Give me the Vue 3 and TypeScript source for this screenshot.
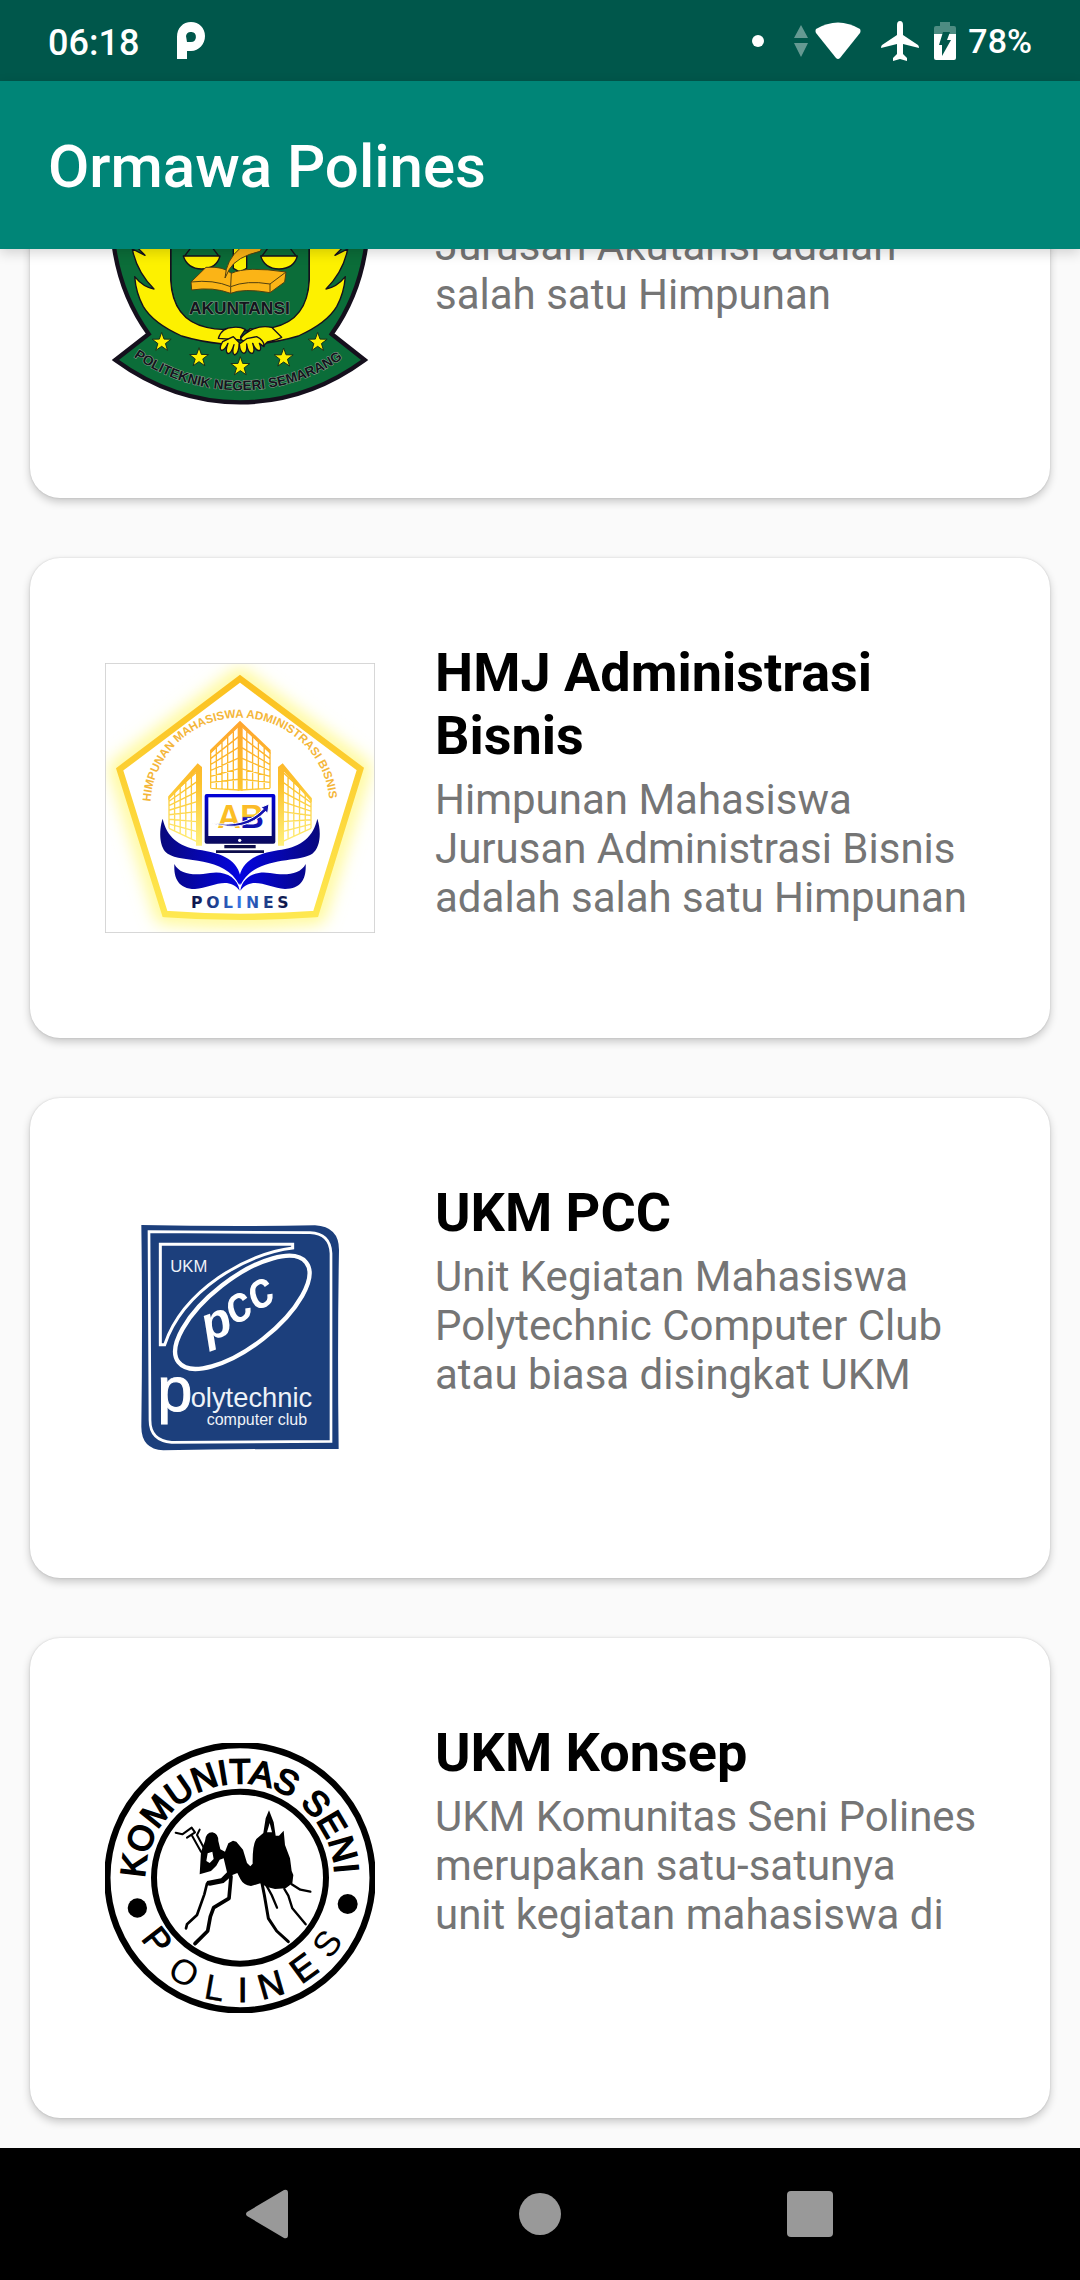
<script setup lang="ts">
interface Organisation {
  id: string
  name: string
  summary: string
}

interface ArcLetter {
  char: string
  x: number
  y: number
  angle: number
  weight: number
}

const organisations: Organisation[] = [
  {
    id: 'akuntansi',
    name: 'HMJ Akuntansi',
    summary: 'Himpunan Mahasiswa\nJurusan Akutansi adalah\nsalah satu Himpunan',
  },
  {
    id: 'bisnis',
    name: 'HMJ Administrasi Bisnis',
    summary: 'Himpunan Mahasiswa\nJurusan Administrasi Bisnis\nadalah salah satu Himpunan',
  },
  {
    id: 'pcc',
    name: 'UKM PCC',
    summary: 'Unit Kegiatan Mahasiswa\nPolytechnic Computer Club\natau biasa disingkat UKM',
  },
  {
    id: 'konsep',
    name: 'UKM Konsep',
    summary: 'UKM Komunitas Seni Polines\nmerupakan satu-satunya\nunit kegiatan mahasiswa di',
  },
]

const sealLetters: ArcLetter[] = [
  { char: 'P', x: 188, y: 616, angle: 52, weight: 3 },
  { char: 'O', x: 268, y: 710, angle: 31, weight: 0 },
  { char: 'L', x: 360, y: 757, angle: 10, weight: 1 },
  { char: 'I', x: 443, y: 762, angle: 0, weight: 3 },
  { char: 'N', x: 527, y: 748, angle: -16, weight: 3 },
  { char: 'E', x: 625, y: 698, angle: -36, weight: 3 },
  { char: 'S', x: 695, y: 625, angle: -54, weight: 0 },
]

const stars: [number, number][] = [
  [215, 307],
  [327, 353],
  [451, 380],
  [581, 354],
  [683, 307],
]

function starPoints(cx: number, cy: number, radius: number): string {
  const points: string[] = []
  for (let i = 0; i < 10; i++) {
    const r = i % 2 === 0 ? radius : radius * 0.4
    const a = (Math.PI / 5) * i - Math.PI / 2
    points.push(`${(cx + r * Math.cos(a)).toFixed(1)},${(cy + r * Math.sin(a)).toFixed(1)}`)
  }
  return points.join(' ')
}

// Window grid of a building face seen in perspective
function facade(
  outer: [number, number, number],
  inner: [number, number, number],
  cols: number,
  rows: number,
): string {
  const [x0, top0, bottom0] = outer
  const [x1, top1, bottom1] = inner
  let d = ''
  for (let r = 0; r <= rows; r++) {
    const t = r / rows
    d += `M${x0} ${top0 + (bottom0 - top0) * t}L${x1} ${top1 + (bottom1 - top1) * t}`
  }
  for (let c = 0; c <= cols; c++) {
    const t = c / cols
    const x = x0 + (x1 - x0) * t
    d += `M${x} ${top0 + (top1 - top0) * t}V${bottom0 + (bottom1 - bottom0) * t}`
  }
  return d
}
</script>

<template>
  <div class="screen">
    <header class="status-bar">
      <span class="clock">06:18</span>
      <svg class="app-glyph" viewBox="0 0 30 38" width="30" height="38" aria-hidden="true">
        <path
          fill="#fff"
          fill-rule="evenodd"
          d="M1 37V15C1 6 7 0 15 0S29 6 29 14 23 29 15 29H11V37ZM11 20H15A5 5 0 1 0 10 14Z"
        />
      </svg>
      <div class="status-icons">
        <svg class="dot" viewBox="0 0 12 12" width="12" height="12" aria-hidden="true">
          <circle cx="6" cy="6" r="6" fill="#fff" />
        </svg>
        <svg class="traffic" viewBox="0 0 14 32" width="14" height="32" aria-hidden="true">
          <path d="M7 0L14 13H0ZM0 18H14L7 32Z" fill="#659992" />
        </svg>
        <svg class="wifi" viewBox="0 0 46 38" width="46" height="38" aria-hidden="true">
          <path d="M1 7Q23 -6 45 7Q46 9 45 11L25 36Q23 38 21 36L1 11Q0 9 1 7Z" fill="#fff" />
        </svg>
        <svg class="plane" viewBox="0 0 38 40" width="38" height="40" aria-hidden="true">
          <path
            fill="#fff"
            d="M19 0Q22 0 22 4V14L37 24Q38 25 38 27L22 23V33L26 37V40L19 38L12 40V37L16 33V23L0 27Q0 25 1 24L16 14V4Q16 0 19 0Z"
          />
        </svg>
        <svg class="battery" viewBox="0 0 22 38" width="22" height="38" aria-hidden="true">
          <path d="M6 0H16V4H20Q22 4 22 6V12H0V6Q0 4 2 4H6Z" fill="#4d8c82" />
          <path d="M0 12H22V36Q22 38 20 38H2Q0 38 0 36Z" fill="#fff" />
          <path d="M9 10H16L13 18H17L8 34V23H5Z" fill="#00574b" />
        </svg>
        <span class="charge">78%</span>
      </div>
    </header>

    <div class="app-bar">
      <h1>Ormawa Polines</h1>
    </div>

    <main class="scroller">
      <div class="list">
        <article v-for="item in organisations" :key="item.id" class="card">
          <div class="logo">
            <svg
              v-if="item.id === 'akuntansi'"
              viewBox="45 -387 810 882"
              width="270"
              height="294"
              role="img"
              aria-label="HMJ Akuntansi"
            >
              <path
                d="M176 282Q95 170 73 27Q60 -150 90 -250Q270 -300 450 -376Q630 -300 810 -250Q840 -150 827 27Q805 170 725 282L824 360Q650 487 450 487Q250 487 76 360Z"
                fill="#0b6d39"
                stroke="#15101d"
                stroke-width="13"
              />
              <path
                d="M242 -60V120Q248 275 420 272H480Q655 275 658 120V-60Z"
                fill="#0b6d39"
                stroke="#15101d"
                stroke-width="5"
              />
              <g fill="#fdf100" stroke="#15101d" stroke-width="4" stroke-linejoin="round">
                <path
                  d="M120 -60H242V120Q248 240 350 262Q390 272 420 266L440 290L400 312Q330 305 275 288Q190 250 160 200Q138 160 134 110Q160 142 192 147Q140 95 127 27L165 46L120 0Z"
                />
                <path
                  d="M120 -60H242V120Q248 240 350 262Q390 272 420 266L440 290L400 312Q330 305 275 288Q190 250 160 200Q138 160 134 110Q160 142 192 147Q140 95 127 27L165 46L120 0Z"
                  transform="translate(900 0) scale(-1 1)"
                />
                <path d="M430 -60H470V85L450 96L430 85Z" />
                <path d="M280 48H390Q380 86 335 87Q292 86 280 48Z" />
                <path d="M512 48H622Q612 86 567 87Q524 86 512 48Z" />
                <path d="M284 48L335 -20L386 48M516 48L567 -20L618 48" fill="none" />
                <path
                  d="M385 295Q395 262 430 262Q450 260 466 268L452 290Q450 305 470 302L490 296L520 318L532 306Q560 300 575 292L545 262Q510 255 480 272Q450 290 452 300Z"
                />
                <path d="M398 305Q386 325 394 331Q404 332 414 310Q404 336 414 341Q424 341 432 314Q424 340 434 345Q446 342 448 308L430 290Z" />
                <path d="M448 312Q450 338 462 340Q472 338 470 312Q474 342 488 340Q496 334 488 310Q496 332 508 332Q516 328 508 310L522 320Q524 302 500 290L470 296Z" />
              </g>
              <g fill="#fbb416" stroke="#51400f" stroke-width="3" stroke-linejoin="round">
                <path d="M303 126L348 82Q400 78 424 100Q470 78 588 96L584 126L540 158Q460 144 422 160Q370 140 305 150Z" />
                <path d="M303 126Q370 118 422 140Q470 120 540 132L588 96M422 140V160M540 132V158M424 100L422 138" fill="none" />
                <path d="M405 114Q408 60 450 25L480 -30L560 -60L510 34Q440 50 418 88Z" />
              </g>
              <g
                class="sans"
                font-weight="700"
                fill="#15151d"
                stroke="#8aa18f"
                stroke-width="3"
                paint-order="stroke"
              >
                <text x="297" y="223" font-size="52">AKUNTANSI</text>
                <path id="ribbon-line" d="M131 350A550 550 0 0 0 782 338" fill="none" stroke="none" />
                <text font-size="41"><textPath href="#ribbon-line">POLITEKNIK NEGERI SEMARANG</textPath></text>
              </g>
              <polygon
                v-for="[cx, cy] in stars"
                :key="cx"
                :points="starPoints(cx, cy, 30)"
                fill="#fdf100"
                stroke="#15301d"
                stroke-width="3"
              />
            </svg>

            <svg
              v-else-if="item.id === 'bisnis'"
              viewBox="30 24 810 810"
              width="270"
              height="270"
              role="img"
              aria-label="HMJ Administrasi Bisnis"
            >
              <defs>
                <linearGradient id="frame-gold" x1="0" y1="0" x2="0" y2="1">
                  <stop offset="0" stop-color="#fbc01f" />
                  <stop offset="1" stop-color="#fee850" />
                </linearGradient>
                <linearGradient id="tower-gold" gradientUnits="userSpaceOnUse" x1="0" y1="200" x2="0" y2="570">
                  <stop offset="0" stop-color="#ffa52e" />
                  <stop offset="0.5" stop-color="#fcc22c" />
                  <stop offset="1" stop-color="#fff07a" />
                </linearGradient>
                <linearGradient id="monitor-blue" gradientUnits="userSpaceOnUse" x1="0" y1="417" x2="0" y2="594">
                  <stop offset="0" stop-color="#0202d8" />
                  <stop offset="1" stop-color="#0b0b45" />
                </linearGradient>
                <linearGradient id="wing-blue" gradientUnits="userSpaceOnUse" x1="195" y1="0" x2="436" y2="0">
                  <stop offset="0" stop-color="#08087c" />
                  <stop offset="1" stop-color="#0404e0" />
                </linearGradient>
                <linearGradient id="word-blue" gradientUnits="userSpaceOnUse" x1="290" y1="0" x2="582" y2="0">
                  <stop offset="0" stop-color="#0c1145" />
                  <stop offset="0.5" stop-color="#3374e6" />
                  <stop offset="1" stop-color="#0a0f3c" />
                </linearGradient>
                <linearGradient id="letter-split" gradientUnits="userSpaceOnUse" x1="0" y1="448" x2="0" y2="520">
                  <stop offset="0" stop-color="#fbb829" />
                  <stop offset="0.5" stop-color="#fbc829" />
                  <stop offset="0.56" stop-color="#1414c0" />
                  <stop offset="1" stop-color="#1010a8" />
                </linearGradient>
                <filter id="halo" x="-20%" y="-20%" width="140%" height="140%">
                  <feGaussianBlur stdDeviation="26" />
                </filter>
              </defs>
              <rect x="30" y="24" width="810" height="810" fill="#fff" />
              <path d="M435 71L796 342L662 777Q435 796 210 777L74 343Z" fill="#fff" stroke="#fff98a" stroke-width="56" filter="url(#halo)" />
              <path d="M435 71L796 342L662 777Q435 794 210 777L74 343Z" fill="#fff" stroke="url(#frame-gold)" stroke-width="19" />
              <path id="name-arc" d="M166 457A269 269 0 0 1 704 457" fill="none" />
              <text class="sans" font-size="35" font-weight="700" fill="#f4b63a">
                <textPath href="#name-arc" startOffset="17">HIMPUNAN MAHASISWA ADMINISTRASI BISNIS</textPath>
              </text>
              <g fill="none" stroke="url(#tower-gold)" stroke-width="4">
                <path :d="facade([347, 293, 400], [432, 212, 405], 5, 6)" />
                <path :d="facade([525, 293, 400], [438, 212, 405], 5, 6)" />
                <path :d="facade([222, 425, 520], [306, 350, 560], 5, 7)" />
                <path :d="facade([648, 430, 520], [562, 350, 560], 5, 7)" />
              </g>
              <g fill="url(#tower-gold)">
                <path d="M345 285L435 197L527 285V297L443 215V407H428V215L345 297Z" />
                <path d="M220 424L308 325L321 336V572H303V350L220 436Z" />
                <path d="M650 430L563 325L549 336V572H567V350L650 442Z" />
              </g>
              <path d="M329 423Q329 417 335 417H535Q541 417 541 423V560Q541 566 535 566H335Q329 566 329 560Z" fill="url(#monitor-blue)" />
              <rect x="340" y="427" width="190" height="116" fill="#fff" />
              <circle cx="434" cy="556" r="5" fill="#fff" />
              <path d="M388 570H482V580H388ZM363 586H507V594H363Z" fill="#0d0d4a" />
              <g class="sans" font-size="98" font-weight="700">
                <text x="367" y="520" fill="#fbbd25">A</text>
                <text x="436" y="520" fill="url(#letter-split)">B</text>
              </g>
              <path d="M350 504Q450 520 505 462L498 457L522 447L518 475L512 469Q450 535 350 504Z" fill="#1212ae" stroke="#fff" stroke-width="3" />
              <g fill="url(#wing-blue)">
                <path d="M203 491C190 530 194 580 218 596C260 625 390 600 433 690Q438 680 436 662C425 610 370 592 310 584C250 574 215 545 203 491Z" />
                <path d="M238 627C236 670 250 702 300 702C350 698 400 660 434 707C428 664 385 646 345 654C300 662 255 660 238 627Z" />
                <g transform="translate(870 0) scale(-1 1)">
                  <path d="M203 491C190 530 194 580 218 596C260 625 390 600 433 690Q438 680 436 662C425 610 370 592 310 584C250 574 215 545 203 491Z" />
                  <path d="M238 627C236 670 250 702 300 702C350 698 400 660 434 707C428 664 385 646 345 654C300 662 255 660 238 627Z" />
                </g>
              </g>
              <text class="wide" x="288 334 384 424 453 504 547" y="760" font-size="47" font-weight="700" fill="url(#word-blue)">POLINES</text>
              <rect x="31" y="25" width="808" height="808" fill="none" stroke="#cfcfcf" stroke-width="3" />
            </svg>

            <svg
              v-else-if="item.id === 'pcc'"
              viewBox="-75 -21 810 810"
              width="270"
              height="270"
              role="img"
              aria-label="UKM PCC"
            >
              <path d="M34 45Q300 50 555 46Q627 50 627 120Q622 400 626 717Q350 716 100 721Q34 717 34 650Q38 350 34 45Z" fill="#1c3f7c" />
              <g fill="none" stroke="#fff">
                <path d="M57 65L540 68Q600 70 603 130V694L125 697Q60 692 60 630Z" stroke-width="8" />
                <path d="M91 103H488V114C350 130 160 240 104 404H91Z" stroke-width="9" />
                <ellipse cx="337" cy="307" rx="243" ry="101" stroke-width="13" transform="rotate(-38 337 307)" />
              </g>
              <g class="sans" fill="#fff">
                <text transform="translate(232 396) rotate(-20)" font-size="146" font-weight="700" font-style="italic">p</text>
                <text transform="translate(313 344) rotate(-28)" font-size="144" font-style="italic" stroke="#fff" stroke-width="4">c</text>
                <text transform="translate(379 302) rotate(-28)" font-size="144" font-style="italic" stroke="#fff" stroke-width="4">c</text>
                <text x="82" y="603" font-size="190" stroke="#fff" stroke-width="3">p</text>
              </g>
              <g class="sans" fill="#eef2f8">
                <text x="121" y="186" font-size="50">UKM</text>
                <text x="182" y="592" font-size="82">olytechnic</text>
                <text x="230" y="646" font-size="48">computer club</text>
              </g>
            </svg>

            <svg
              v-else
              viewBox="30 24 810 810"
              width="270"
              height="270"
              role="img"
              aria-label="UKM Konsep"
            >
              <g fill="none" stroke="#000">
                <circle cx="435" cy="428" r="398" stroke-width="19" />
                <circle cx="435" cy="428" r="258" stroke-width="18" />
                <path id="seal-arc" d="M150 430A285 285 0 0 1 720 430" stroke="none" />
              </g>
              <circle cx="127" cy="519" r="29" />
              <circle cx="758" cy="507" r="30" />
              <g class="sans" stroke="#000">
                <text font-size="104" stroke-width="5"><textPath href="#seal-arc">KOMUNITAS SENI</textPath></text>
                <text
                  v-for="letter in sealLetters"
                  :key="letter.char"
                  :transform="`translate(${letter.x} ${letter.y}) rotate(${letter.angle})`"
                  :stroke-width="letter.weight"
                  y="38"
                  font-size="106"
                  text-anchor="middle"
                >{{ letter.char }}</text>
              </g>
              <path
                fill-rule="evenodd"
                d="M314 418L318 350L330 318Q332 292 352 292Q370 296 370 318L376 343L390 350L400 325L414 317L424 320L444 344L456 384L466 394L473 386Q472 330 484 312L505 294L512 250L522 226L536 262L542 302L552 302L566 287L570 330L585 370L590 408L595 420L592 445L572 460L540 462L516 456L496 445L468 453Q445 450 436 432L427 414L412 420L404 428L386 444L345 452L333 450L336 438L378 430L396 412L386 370L374 374L364 392L348 408ZM338 355L334 378L344 384L356 372L352 350ZM516 292H531L524 264Z"
              />
              <g fill="none" stroke="#000" stroke-linejoin="round" stroke-linecap="round">
                <path d="M242 293L262 298L290 278L300 292L276 308M290 300L318 350M314 284L306 300L330 345" stroke-width="6" />
                <path d="M336 446L328 478L306 540L276 568L273 580" stroke-width="8" />
                <path d="M408 425L402 490L356 518L346 545L338 588L300 626" stroke-width="11" />
                <path d="M500 440L508 480L520 550L545 588L580 620" stroke-width="9" />
                <path d="M508 440L530 480L546 518" stroke-width="7" />
                <path d="M568 462L580 482L592 520L632 568" stroke-width="7" />
                <path d="M590 448L616 464L646 470" stroke-width="7" />
              </g>
            </svg>
          </div>
          <div class="details">
            <h2>{{ item.name }}</h2>
            <p>{{ item.summary }}</p>
          </div>
        </article>
      </div>
    </main>

    <nav class="nav-bar" aria-label="System navigation">
      <button type="button" aria-label="Back">
        <svg viewBox="0 0 48 48" width="48" height="48" aria-hidden="true">
          <path d="M1 22L38 0Q42 -1 42 3V45Q42 49 38 48L1 26Q-1 24 1 22Z" fill="#999" />
        </svg>
      </button>
      <button type="button" aria-label="Home">
        <svg viewBox="0 0 48 48" width="48" height="48" aria-hidden="true">
          <circle cx="24" cy="24" r="21" fill="#999" />
        </svg>
      </button>
      <button type="button" aria-label="Recent apps">
        <svg viewBox="0 0 48 48" width="48" height="48" aria-hidden="true">
          <rect x="1" y="1" width="46" height="46" rx="4" fill="#999" />
        </svg>
      </button>
    </nav>
  </div>
</template>

<style>
body {
  margin: 0;
  background: #fafafa;
}
</style>

<style scoped>
.screen {
  display: flex;
  flex-direction: column;
  height: 100vh;
  overflow: hidden;
  font-family: Roboto, 'Noto Sans', sans-serif;
  background: #fafafa;
}

.status-bar {
  display: flex;
  flex: none;
  align-items: center;
  box-sizing: border-box;
  height: 81px;
  padding: 0 48px;
  color: #fff;
  background: #00574b;
}

.clock {
  padding-top: 4px;
  font-size: 36px;
  font-weight: 500;
  line-height: 42px;
}

.app-glyph {
  margin-left: 37px;
}

.status-icons {
  display: flex;
  align-items: center;
  margin-left: auto;
}

.traffic {
  margin-left: 30px;
}

.wifi {
  margin-left: 7px;
}

.plane {
  margin-left: 20px;
}

.battery {
  margin-left: 15px;
}

.charge {
  margin-left: 12px;
  font-size: 34px;
  font-weight: 500;
  line-height: 42px;
}

.app-bar {
  position: relative;
  z-index: 1;
  display: flex;
  flex: none;
  align-items: center;
  box-sizing: border-box;
  height: 168px;
  padding: 4px 48px 0;
  color: #fff;
  background: #008577;
  box-shadow: 0 4px 12px rgba(0, 0, 0, 0.16);
}

h1 {
  margin: 0;
  font-size: 60px;
  font-weight: 500;
  line-height: 70px;
}

/* Reversed axis keeps the list resting at its end */
.scroller {
  display: flex;
  flex: 1;
  flex-direction: column-reverse;
  min-height: 0;
  overflow-y: auto;
  scrollbar-width: none;
}

.list {
  display: flex;
  flex: none;
  flex-direction: column;
  gap: 60px;
  padding: 30px;
}

.card {
  display: flex;
  gap: 60px;
  box-sizing: border-box;
  min-height: 480px;
  padding: 75px 60px 75px 75px;
  border-radius: 30px;
  background: #fff;
  box-shadow:
    0 0 2px rgba(0, 0, 0, 0.16),
    0 4px 8px rgba(0, 0, 0, 0.2);
}

.logo {
  display: flex;
  flex: none;
  align-items: center;
}

.details {
  flex: 1;
  min-width: 0;
  padding-top: 8px;
}

h2 {
  margin: 0 0 8px;
  font-size: 54px;
  font-weight: 700;
  line-height: 63px;
  color: #000;
}

p {
  margin: 0;
  font-size: 42px;
  line-height: 49px;
  white-space: pre-line;
  color: #757575;
}

.sans {
  font-family: 'Liberation Sans', Arial, sans-serif;
}

.wide {
  font-family: 'DejaVu Sans', sans-serif;
}

.nav-bar {
  display: grid;
  flex: none;
  grid-template-columns: repeat(3, 1fr);
  height: 132px;
  padding: 0 12.5%;
  background: #000;
}

.nav-bar button {
  display: flex;
  align-items: center;
  justify-content: center;
  padding: 0;
  border: 0;
  background: none;
}

.nav-bar svg {
  overflow: visible;
}
</style>
